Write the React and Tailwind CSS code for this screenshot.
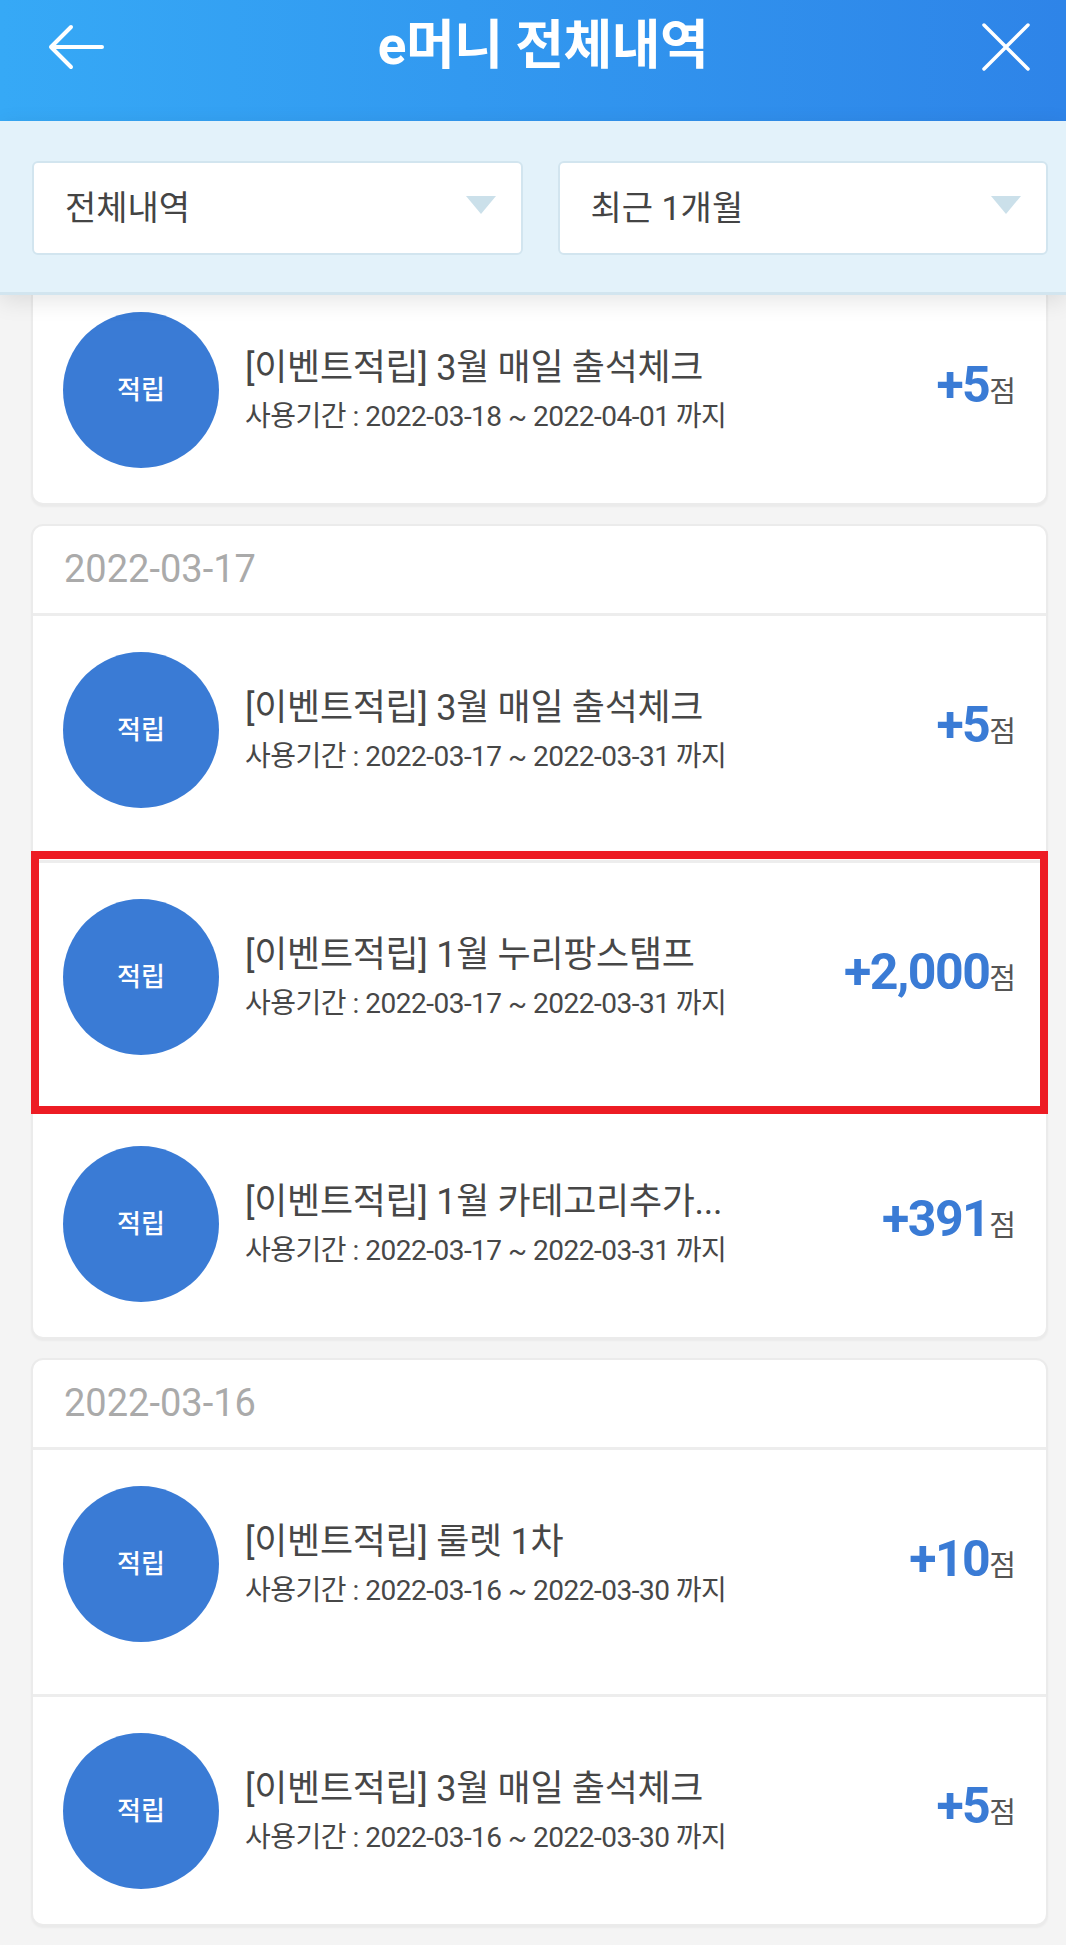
import React from "react";

const groups = [
    {
        date: null,
        items: [
            { title: "[이벤트적립] 3월 매일 출석체크", period: "2022-03-18 ~ 2022-04-01", amount: "+5" },
        ],
    },
    {
        date: "2022-03-17",
        items: [
            { title: "[이벤트적립] 3월 매일 출석체크", period: "2022-03-17 ~ 2022-03-31", amount: "+5" },
            { title: "[이벤트적립] 1월 누리팡스탬프", period: "2022-03-17 ~ 2022-03-31", amount: "+2,000", marked: true },
            { title: "[이벤트적립] 1월 카테고리추가...", period: "2022-03-17 ~ 2022-03-31", amount: "+391" },
        ],
    },
    {
        date: "2022-03-16",
        items: [
            { title: "[이벤트적립] 룰렛 1차", period: "2022-03-16 ~ 2022-03-30", amount: "+10" },
            { title: "[이벤트적립] 3월 매일 출석체크", period: "2022-03-16 ~ 2022-03-30", amount: "+5" },
        ],
    },
];

const Select = ({ label }) => (
    <div className="flex-1 h-[94px] bg-white border-2 border-[#d2e5ef] rounded-[6px] flex items-center justify-between pl-[31px] pr-[25px]">
        <span className="text-[34px] text-[#444]">{label}</span>
        <svg width="30" height="18" viewBox="0 0 30 18" className="-mt-[6px]">
            <polygon points="0,0 30,0 15,18" fill="#cbe0ea" />
        </svg>
    </div>
);

const Row = ({ item, first, last }) => (
    <div
        className={`relative flex items-center pl-[30px] pr-[30px] ${first ? "pt-[17px]" : "pt-[36px]"} ${
            last ? "pb-[35px]" : "pb-[52px] border-b-[3px] border-[#ededed]"
        }`}
    >
        <div className="w-[156px] h-[156px] rounded-full bg-[#3a7bd5] flex items-center justify-center shrink-0">
            <span className="text-white text-[26px] font-medium">적립</span>
        </div>
        <div className="flex-1 min-w-0 ml-[26px]">
            <div className="text-[36px] leading-[46px] text-[#474747] tracking-[-0.3px] whitespace-nowrap">{item.title}</div>
            <div className="mt-[8px] text-[28px] leading-[36px] text-[#474747] tracking-[-0.5px] whitespace-nowrap">
                사용기간 : {item.period} 까지
            </div>
        </div>
        <div className="flex items-baseline -mt-[10px]">
            <span className="text-[50px] font-bold text-[#3a7bd5] tracking-[-1.5px]">{item.amount}</span>
            <span className="text-[29px] text-[#555]">점</span>
        </div>
        {item.marked && (
            <div className="absolute -top-[12px] -bottom-[7px] -left-[2px] -right-[2px] border-[8px] border-[#ed1c24] pointer-events-none z-10"></div>
        )}
    </div>
);

export default function App() {
    return (
        <div className="w-[1066px] min-h-[1945px] bg-[#f4f4f4] font-['Roboto','Noto_Sans_CJK_KR',sans-serif]">
            {/* header */}
            <div className="h-[121px] bg-gradient-to-r from-[#36a9f6] to-[#2e84e8]">
                <div className="h-[94px] flex items-center justify-between pl-[48px] pr-[36px]">
                    <svg width="56" height="46" viewBox="0 0 56 46" fill="none" stroke="white" strokeWidth="4" strokeLinecap="round" strokeLinejoin="round">
                        <path d="M3 23 H54 M23 3 L3 23 L23 43" />
                    </svg>
                    <h1 className="text-white text-[53px] font-bold tracking-[-0.5px]">e머니 전체내역</h1>
                    <svg width="48" height="48" viewBox="0 0 48 48" fill="none" stroke="white" strokeWidth="3.5" strokeLinecap="round">
                        <path d="M2 2 L46 46 M46 2 L2 46" />
                    </svg>
                </div>
            </div>

            {/* filters */}
            <div className="relative z-20 bg-[#e3f2fa] border-b-[3px] border-[#d2e5ef] pt-[40px] pb-[37px] pl-[32px] pr-[18px] flex gap-[35px] shadow-[0_6px_22px_rgba(0,0,0,0.10)]">
                <Select label="전체내역" />
                <Select label="최근 1개월" />
            </div>

            {/* list */}
            <div className="flex flex-col gap-[19px] pl-[31px] pr-[18px] pb-[18px]">
                {groups.map((group, gi) => (
                    <div
                        key={gi}
                        className={`bg-white border-2 border-[#ebebeb] ${
                            gi === 0 ? "border-t-0 rounded-b-[12px]" : "rounded-[12px]"
                        } shadow-[0_2px_2px_rgba(0,0,0,0.04)]`}
                    >
                        {group.date && (
                            <div className="h-[90px] flex items-center pl-[31px] border-b-[3px] border-[#ededed]">
                                <span className="text-[38px] text-[#aaaaaa]">{group.date}</span>
                            </div>
                        )}
                        {group.items.map((item, i) => (
                            <Row key={i} item={item} first={gi === 0} last={i === group.items.length - 1} />
                        ))}
                    </div>
                ))}
            </div>
        </div>
    );
}
